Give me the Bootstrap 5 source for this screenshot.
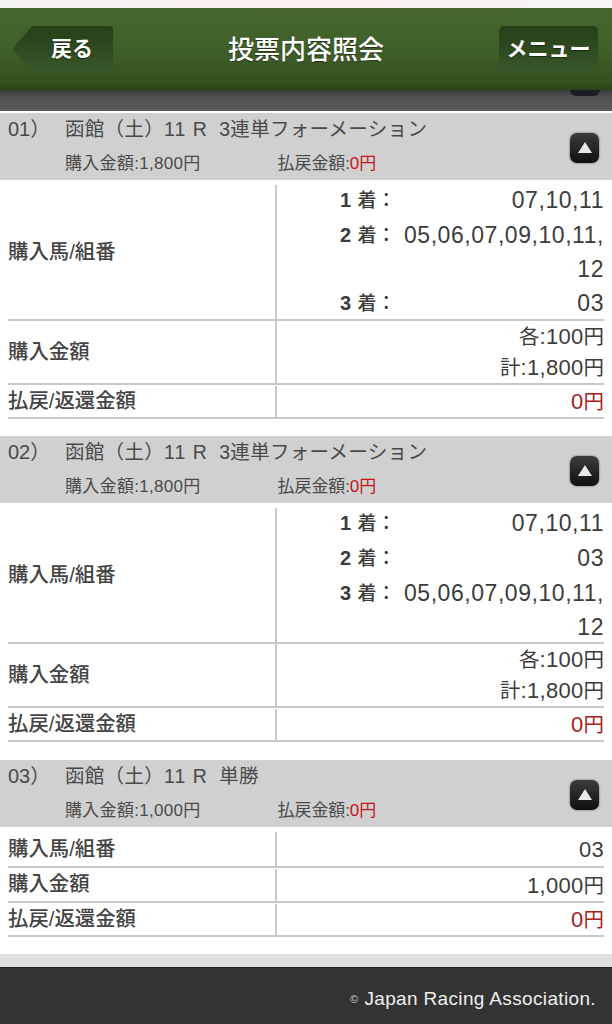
<!DOCTYPE html>
<html lang="ja">
<head>
<meta charset="utf-8">
<link rel="stylesheet" href="https://cdn.jsdelivr.net/npm/bootstrap@5.3.0/dist/css/bootstrap.min.css">
<style>
:root{--jp:"Liberation Sans","Noto Sans CJK JP",sans-serif;}
body{width:612px;height:1024px;overflow:hidden;background:#fff;font-family:var(--jp);color:#3c3c3c;}
.topline{height:8px;background:linear-gradient(90deg,#f6f4f3,#fbf0f0 50%,#f6f6f6);}
.appbar{height:82px;background:linear-gradient(#47672f,#40602b 50%,#34501f 92%,#2c401c);padding:0 14px 0 13px;color:#fff;}
.btn-back,.btn-menu{color:#fff;font-weight:700;font-size:21px;background:linear-gradient(#263f19,#2f4b20 50%,#39582a);border:0;display:flex;align-items:center;justify-content:center;text-shadow:0 1px 1px #1a2a10;}
.btn-back{width:100px;height:46px;clip-path:path("M19 0H96a4 4 0 0 1 4 4V42a4 4 0 0 1-4 4H19L1 25a3 3 0 0 1 0-4Z");padding:0 0 0 18px;}
.btn-menu{width:99px;height:47px;border-radius:5px;}
.appbar-title{font-size:26px;font-weight:500;line-height:1;text-shadow:0 1px 1px #1e2e14;padding-top:2px;}
.strip{height:21px;background:linear-gradient(#3a3a3a,#505050 30%,#5a5a5a);padding-right:12px;}
.strip-knob{width:30px;height:6px;background:#1c1e26;border-radius:0 0 8px 8px;filter:blur(.6px);}
.gapline{height:2px;background:#fff;}
.tkt-head{height:67px;background:#d0d0d0;padding:2px 13px 0 8px;color:#4a4a4a;}
.tkt-no{width:57px;font-size:20px;flex:none;}
.tkt-title{font-size:19.5px;letter-spacing:.3px;}
.race-no{letter-spacing:1px;}
.tkt-line{line-height:28px;white-space:nowrap;}
.tkt-sub{font-size:17px;line-height:24px;margin-top:9px;padding-left:57px;letter-spacing:-.1px;}
.tkt-amt{letter-spacing:.3px;}
.tkt-paid{margin-left:77px;}
.sum-red{color:#c4161c;}
.tgl{width:29px;height:30px;border-radius:7px;background:linear-gradient(#3c3c3c,#101014);box-shadow:0 0 2px #444;flex:none;}
.tgl i{display:block;width:0;height:0;border-left:7px solid transparent;border-right:7px solid transparent;border-bottom:11px solid #e8e8e8;}
.tkt-body{padding:5px 8px 17px;}
.body-mid{padding-bottom:18px;}
.rw{display:flex;border-bottom:2px solid #c8c8c8;}
.lab{width:267px;font-size:20.4px;font-weight:500;color:#444;display:flex;align-items:center;flex:none;}
.val{flex:1;border-left:2px solid #c8c8c8;text-align:right;font-size:22px;letter-spacing:.3px;color:#3c3c3c;min-width:0;}
.h-stack{height:134px;}
.h-2{height:62px;line-height:31px;}
.h-1{height:31px;line-height:31px;margin-top:1px;}
.h-34{height:34px;line-height:36px;}
.h-33{height:32px;line-height:33px;margin-top:1px;}
.h-32{height:31px;line-height:32px;margin-top:1px;}
.cjk-s{font-size:20.5px;letter-spacing:0;}
.val-wrap{display:flex;padding-left:63px;line-height:34px;}
.val-wrap:first-child{margin-top:-2px;}
.chaku{width:60px;flex:none;text-align:left;font-size:19px;font-weight:500;}
.chaku-no{font-size:20px;margin-right:6px;font-weight:700;}
.num{flex:1;font-size:23px;letter-spacing:.55px;}
.yen-red{color:#a8201c;}
.tail{height:13px;background:#e0e0e0;}
.foot{height:57px;background:#333;border-top:1px solid #1e1e1e;color:#eee;font-size:19px;padding:6px 16px 0 0;letter-spacing:.35px;}
.copy-mark{font-size:11px;margin-right:6px;color:#ccc;}
</style>
</head>
<body>
<div class="topline"></div>
<header class="appbar d-flex align-items-center justify-content-between">
  <button class="btn-back" type="button">戻る</button>
  <h1 class="appbar-title m-0">投票内容照会</h1>
  <button class="btn-menu" type="button">メニュー</button>
</header>
<div class="strip d-flex justify-content-end"><div class="strip-knob"></div></div>
<div class="gapline"></div>

<section>
  <div class="tkt-head d-flex justify-content-between">
    <div>
      <div class="tkt-line d-flex"><span class="tkt-no">01）</span><span class="tkt-title">函館（土）<span class="race-no">11 R</span>&nbsp; 3連単フォーメーション</span></div>
      <div class="tkt-sub"><span class="tkt-amt">購入金額:1,800円</span><span class="tkt-paid">払戻金額:<span class="sum-red">0円</span></span></div>
    </div>
    <div class="tgl align-self-center d-flex align-items-center justify-content-center"><i></i></div>
  </div>
  <div class="tkt-body">
    <div class="rw"><div class="lab">購入馬/組番</div><div class="val h-stack">
      <div class="val-wrap"><span class="chaku"><span class="chaku-no">1</span>着：</span><span class="num">07,10,11</span></div>
      <div class="val-wrap"><span class="chaku"><span class="chaku-no">2</span>着：</span><span class="num">05,06,07,09,10,11,<br>12</span></div>
      <div class="val-wrap"><span class="chaku"><span class="chaku-no">3</span>着：</span><span class="num">03</span></div>
    </div></div>
    <div class="rw"><div class="lab">購入金額</div><div class="val h-2"><span class="cjk-s">各</span>:100<span class="cjk-s">円</span><br><span class="cjk-s">計</span>:1,800<span class="cjk-s">円</span></div></div>
    <div class="rw"><div class="lab">払戻/返還金額</div><div class="val h-1 yen-red">0<span class="cjk-s">円</span></div></div>
  </div>
</section>

<section>
  <div class="tkt-head d-flex justify-content-between">
    <div>
      <div class="tkt-line d-flex"><span class="tkt-no">02）</span><span class="tkt-title">函館（土）<span class="race-no">11 R</span>&nbsp; 3連単フォーメーション</span></div>
      <div class="tkt-sub"><span class="tkt-amt">購入金額:1,800円</span><span class="tkt-paid">払戻金額:<span class="sum-red">0円</span></span></div>
    </div>
    <div class="tgl align-self-center d-flex align-items-center justify-content-center"><i></i></div>
  </div>
  <div class="tkt-body body-mid">
    <div class="rw"><div class="lab">購入馬/組番</div><div class="val h-stack">
      <div class="val-wrap"><span class="chaku"><span class="chaku-no">1</span>着：</span><span class="num">07,10,11</span></div>
      <div class="val-wrap"><span class="chaku"><span class="chaku-no">2</span>着：</span><span class="num">03</span></div>
      <div class="val-wrap"><span class="chaku"><span class="chaku-no">3</span>着：</span><span class="num">05,06,07,09,10,11,<br>12</span></div>
    </div></div>
    <div class="rw"><div class="lab">購入金額</div><div class="val h-2"><span class="cjk-s">各</span>:100<span class="cjk-s">円</span><br><span class="cjk-s">計</span>:1,800<span class="cjk-s">円</span></div></div>
    <div class="rw"><div class="lab">払戻/返還金額</div><div class="val h-1 yen-red">0<span class="cjk-s">円</span></div></div>
  </div>
</section>

<section>
  <div class="tkt-head d-flex justify-content-between">
    <div>
      <div class="tkt-line d-flex"><span class="tkt-no">03）</span><span class="tkt-title">函館（土）<span class="race-no">11 R</span>&nbsp; 単勝</span></div>
      <div class="tkt-sub"><span class="tkt-amt">購入金額:1,000円</span><span class="tkt-paid">払戻金額:<span class="sum-red">0円</span></span></div>
    </div>
    <div class="tgl align-self-center d-flex align-items-center justify-content-center"><i></i></div>
  </div>
  <div class="tkt-body">
    <div class="rw"><div class="lab">購入馬/組番</div><div class="val h-34">03</div></div>
    <div class="rw"><div class="lab">購入金額</div><div class="val h-33">1,000<span class="cjk-s">円</span></div></div>
    <div class="rw"><div class="lab">払戻/返還金額</div><div class="val h-32 yen-red">0<span class="cjk-s">円</span></div></div>
  </div>
</section>

<div class="tail"></div>
<footer class="foot d-flex align-items-center justify-content-end"><span class="copy-mark">©</span>Japan Racing Association.</footer>
</body>
</html>
